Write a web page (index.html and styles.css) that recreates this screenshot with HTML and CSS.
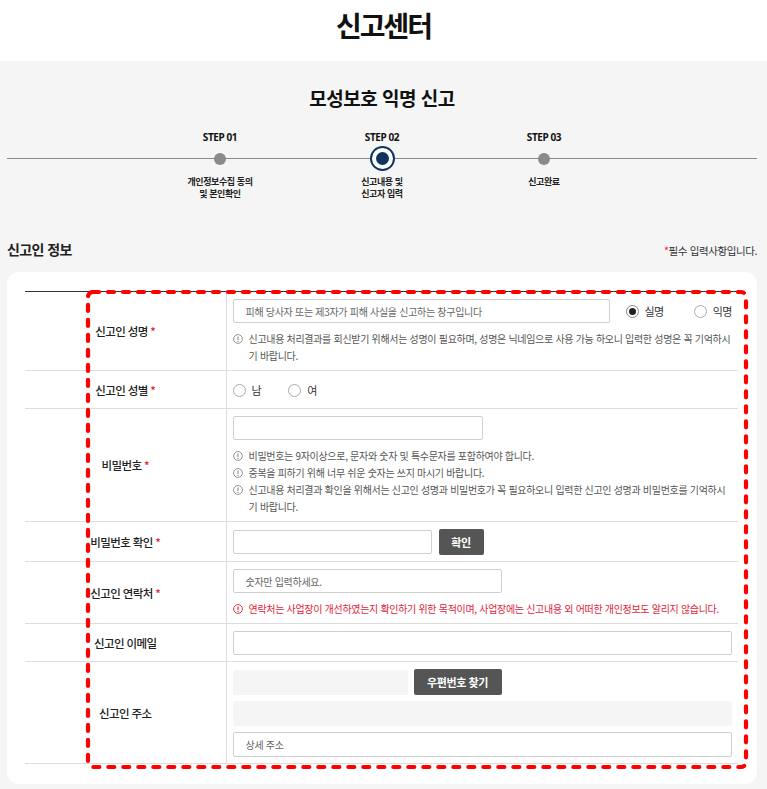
FILE: index.html
```html
<!DOCTYPE html>
<html lang="ko">
<head>
<meta charset="utf-8">
<title>신고센터</title>
<link rel="stylesheet" href="styles.css">
</head>
<body>
<header class="top">
  <h1 class="top-title">신고센터</h1>
</header>
<main class="main">
  <h2 class="page-title">모성보호 익명 신고</h2>
  <ol class="steps">
    <li class="step">
      <span class="step-no">STEP 01</span>
      <span class="dot-wrap"><span class="dot"></span></span>
      <span class="step-name">개인정보수집 동의<br>및 본인확인</span>
    </li>
    <li class="step">
      <span class="step-no">STEP 02</span>
      <span class="dot-wrap"><span class="dot dot-active"></span></span>
      <span class="step-name">신고내용 및<br>신고자 입력</span>
    </li>
    <li class="step">
      <span class="step-no">STEP 03</span>
      <span class="dot-wrap"><span class="dot"></span></span>
      <span class="step-name">신고완료</span>
    </li>
  </ol>

  <div class="section-head">
    <h3 class="section-title">신고인 정보</h3>
    <p class="req"><span class="star">*</span>필수 입력사항입니다.</p>
  </div>

  <div class="card">
    <table class="form">
      <tbody>
        <tr>
          <th>신고인 성명 <span class="star">*</span></th>
          <td>
            <div class="line">
              <input class="field field-grow" type="text" placeholder="피해 당사자 또는 제3자가 피해 사실을 신고하는 창구입니다">
              <label class="radio radio-first"><span class="radio-mark is-checked"></span>실명</label>
              <label class="radio radio-second"><span class="radio-mark"></span>익명</label>
            </div>
            <ul class="help">
              <li><svg class="ico" viewBox="0 0 10 10"><circle cx="5" cy="5" r="4.4" fill="none" stroke="currentColor" stroke-width="0.9"/><line x1="5" y1="2.5" x2="5" y2="5.9" stroke="currentColor" stroke-width="1.1"/><circle cx="5" cy="7.4" r="0.65" fill="currentColor"/></svg><span>신고내용 처리결과를 회신받기 위해서는 성명이 필요하며, 성명은 닉네임으로 사용 가능 하오니 입력한 성명은 꼭 기억하시기 바랍니다.</span></li>
            </ul>
          </td>
        </tr>
        <tr>
          <th>신고인 성별 <span class="star">*</span></th>
          <td>
            <div class="line">
              <label class="radio radio-gender"><span class="radio-mark"></span>남</label>
              <label class="radio radio-gender"><span class="radio-mark"></span>여</label>
            </div>
          </td>
        </tr>
        <tr>
          <th>비밀번호 <span class="star">*</span></th>
          <td>
            <input class="field w-pw" type="password">
            <ul class="help">
              <li><svg class="ico" viewBox="0 0 10 10"><circle cx="5" cy="5" r="4.4" fill="none" stroke="currentColor" stroke-width="0.9"/><line x1="5" y1="2.5" x2="5" y2="5.9" stroke="currentColor" stroke-width="1.1"/><circle cx="5" cy="7.4" r="0.65" fill="currentColor"/></svg><span>비밀번호는 9자이상으로, 문자와 숫자 및 특수문자를 포함하여야 합니다.</span></li>
              <li><svg class="ico" viewBox="0 0 10 10"><circle cx="5" cy="5" r="4.4" fill="none" stroke="currentColor" stroke-width="0.9"/><line x1="5" y1="2.5" x2="5" y2="5.9" stroke="currentColor" stroke-width="1.1"/><circle cx="5" cy="7.4" r="0.65" fill="currentColor"/></svg><span>중복을 피하기 위해 너무 쉬운 숫자는 쓰지 마시기 바랍니다.</span></li>
              <li><svg class="ico" viewBox="0 0 10 10"><circle cx="5" cy="5" r="4.4" fill="none" stroke="currentColor" stroke-width="0.9"/><line x1="5" y1="2.5" x2="5" y2="5.9" stroke="currentColor" stroke-width="1.1"/><circle cx="5" cy="7.4" r="0.65" fill="currentColor"/></svg><span>신고내용 처리결과 확인을 위해서는 신고인 성명과 비밀번호가 꼭 필요하오니 입력한 신고인 성명과 비밀번호를 기억하시기 바랍니다.</span></li>
            </ul>
          </td>
        </tr>
        <tr>
          <th>비밀번호 확인 <span class="star">*</span></th>
          <td>
            <div class="line">
              <input class="field w-pw2" type="password">
              <button class="btn btn-check" type="button">확인</button>
            </div>
          </td>
        </tr>
        <tr>
          <th>신고인 연락처 <span class="star">*</span></th>
          <td>
            <input class="field w-tel" type="text" placeholder="숫자만 입력하세요.">
            <ul class="help help-red">
              <li><svg class="ico" viewBox="0 0 10 10"><circle cx="5" cy="5" r="4.4" fill="none" stroke="currentColor" stroke-width="0.9"/><line x1="5" y1="2.5" x2="5" y2="5.9" stroke="currentColor" stroke-width="1.1"/><circle cx="5" cy="7.4" r="0.65" fill="currentColor"/></svg><span>연락처는 사업장이 개선하였는지 확인하기 위한 목적이며, 사업장에는 신고내용 외 어떠한 개인정보도 알리지 않습니다.</span></li>
            </ul>
          </td>
        </tr>
        <tr>
          <th>신고인 이메일</th>
          <td>
            <input class="field w-full" type="text">
          </td>
        </tr>
        <tr>
          <th>신고인 주소</th>
          <td>
            <div class="addr">
              <div class="line">
                <span class="readonly w-zip"></span>
                <button class="btn btn-zip" type="button">우편번호 찾기</button>
              </div>
              <span class="readonly w-full"></span>
              <input class="field field-tall w-full" type="text" placeholder="상세 주소">
            </div>
          </td>
        </tr>
      </tbody>
    </table>
    <svg class="highlight" viewBox="0 0 664 481" aria-hidden="true">
      <rect x="3" y="3" width="658" height="475" rx="5" ry="5" fill="none" stroke="#ff0000" stroke-width="4.2" stroke-dasharray="6 9" stroke-linecap="round"/>
    </svg>
  </div>
</main>
</body>
</html>
```

FILE: styles.css
```css
* {
  box-sizing: border-box;
}

html, body {
  margin: 0;
  padding: 0;
}

body {
  font-family: "Noto Sans CJK KR", "Noto Sans", sans-serif;
  color: #222;
  background: #f5f5f5;
}

.top {
  background: #fff;
  height: 61px;
  padding-top: 5px;
}

.top-title {
  margin: 0;
  text-align: center;
  font-size: 28px;
  line-height: 40px;
  font-weight: 700;
  letter-spacing: -2px;
  color: #111;
}

.main {
  background: #f5f5f5;
  padding: 0 10px 7px 7px;
}

.page-title {
  margin: 0;
  padding-top: 24px;
  text-align: center;
  font-size: 19px;
  line-height: 26px;
  font-weight: 700;
  letter-spacing: -0.5px;
  color: #111;
}

/* steps */
.steps {
  list-style: none;
  margin: 19px 0 0;
  padding: 0;
  display: grid;
  grid-template-columns: repeat(3, 162px);
  justify-content: center;
  position: relative;
}

.steps::before {
  content: "";
  position: absolute;
  left: 0;
  right: 0;
  top: 28px;
  height: 1px;
  background: #8a8a8a;
}

.step {
  display: flex;
  flex-direction: column;
  align-items: center;
  position: relative;
}

.step-no {
  font-family: "Noto Sans", sans-serif;
  font-size: 10px;
  line-height: 14px;
  font-weight: 700;
  letter-spacing: -0.4px;
  color: #111;
}

.dot-wrap {
  height: 25px;
  margin-top: 2px;
  display: flex;
  align-items: center;
  justify-content: center;
}

.dot {
  width: 12px;
  height: 12px;
  border-radius: 50%;
  background: #8a8a8a;
}

.dot-active {
  width: 25px;
  height: 25px;
  background: #fff;
  border: 2px solid #0f345f;
  display: flex;
  align-items: center;
  justify-content: center;
}

.dot-active::after {
  content: "";
  width: 13px;
  height: 13px;
  border-radius: 50%;
  background: #0f345f;
}

.step-name {
  margin-top: 5px;
  font-size: 9px;
  line-height: 12px;
  font-weight: 700;
  letter-spacing: -0.4px;
  text-align: center;
  color: #222;
}

/* section head */
.section-head {
  margin-top: 39px;
  display: flex;
  justify-content: space-between;
  align-items: flex-end;
  margin-bottom: 13px;
}

.section-title {
  margin: 0;
  font-size: 14px;
  line-height: 20px;
  font-weight: 700;
  letter-spacing: -0.6px;
  color: #222;
}

.req {
  margin: 0 0 1px;
  font-size: 10.5px;
  line-height: 14px;
  letter-spacing: -0.4px;
  color: #333;
}

.star {
  color: #e0202e;
}

/* card */
.card {
  position: relative;
  background: #fff;
  border-radius: 12px;
  padding: 19px 19px 20px 18px;
}

.form {
  width: 100%;
  border-collapse: collapse;
  border-top: 1px solid #333;
}

.form th {
  width: 201px;
  padding: 0 4px;
  border-right: 1px solid #ddd;
  border-bottom: 1px solid #ddd;
  text-align: center;
  vertical-align: middle;
  font-size: 11.5px;
  font-weight: 500;
  letter-spacing: -0.6px;
  color: #222;
}

.form td {
  padding: 7px 6px 6px;
  border-bottom: 1px solid #ddd;
  vertical-align: top;
}

.line {
  display: flex;
  align-items: center;
  min-height: 24px;
}

.field {
  display: block;
  height: 24px;
  border: 1px solid #cfcfcf;
  border-radius: 2px;
  padding: 0 12px;
  font-family: inherit;
  font-size: 10px;
  letter-spacing: -0.3px;
  color: #333;
  background: #fff;
  outline: none;
}

.field::placeholder {
  color: #666;
}

.field-tall {
  height: 25px;
}

.field-grow {
  flex: 1 1 auto;
  min-width: 0;
}

.w-pw { width: 250px; }
.w-pw2 { width: 199px; }
.w-tel { width: 269px; }
.w-full { width: 100%; }
.w-zip { width: 175px; }

.radio {
  display: inline-flex;
  align-items: center;
  font-size: 11px;
  letter-spacing: -0.5px;
  color: #333;
  white-space: nowrap;
}

.radio-first {
  margin-left: 16px;
}

.radio-second {
  margin-left: 30px;
}

.radio-gender {
  margin-right: 27px;
}

.radio-mark {
  width: 13px;
  height: 13px;
  border-radius: 50%;
  border: 1px solid #aaa;
  background: #fff;
  margin-right: 6px;
  display: inline-flex;
  align-items: center;
  justify-content: center;
}

.radio-mark.is-checked {
  border-color: #888;
}

.radio-mark.is-checked::after {
  content: "";
  width: 7px;
  height: 7px;
  border-radius: 50%;
  background: #222;
}

.help {
  list-style: none;
  margin: 7px 0 0;
  padding: 0;
  font-size: 10px;
  line-height: 17px;
  letter-spacing: -0.31px;
  color: #555;
  word-break: break-all;
}

.help li {
  display: grid;
  grid-template-columns: 16px 1fr;
}

.ico {
  width: 10px;
  height: 10px;
  margin-top: 3.5px;
  color: #888;
}

.help-red {
  color: #e2233b;
}

.help-red .ico {
  color: #e2233b;
}

.btn {
  border: 0;
  border-radius: 2px;
  background: #555;
  color: #fff;
  font-family: inherit;
  font-size: 11px;
  font-weight: 700;
  letter-spacing: -0.4px;
  height: 26px;
  padding: 0;
  cursor: pointer;
}

.btn-check {
  width: 45px;
  margin-left: 7px;
}

.btn-zip {
  width: 88px;
  margin-left: 6px;
}

.addr {
  display: flex;
  flex-direction: column;
  gap: 6px;
}

.readonly {
  display: block;
  height: 25px;
  background: #f5f5f5;
  border-radius: 2px;
}

.highlight {
  position: absolute;
  left: 78px;
  top: 17px;
  width: 664px;
  height: 481px;
  pointer-events: none;
}
```
